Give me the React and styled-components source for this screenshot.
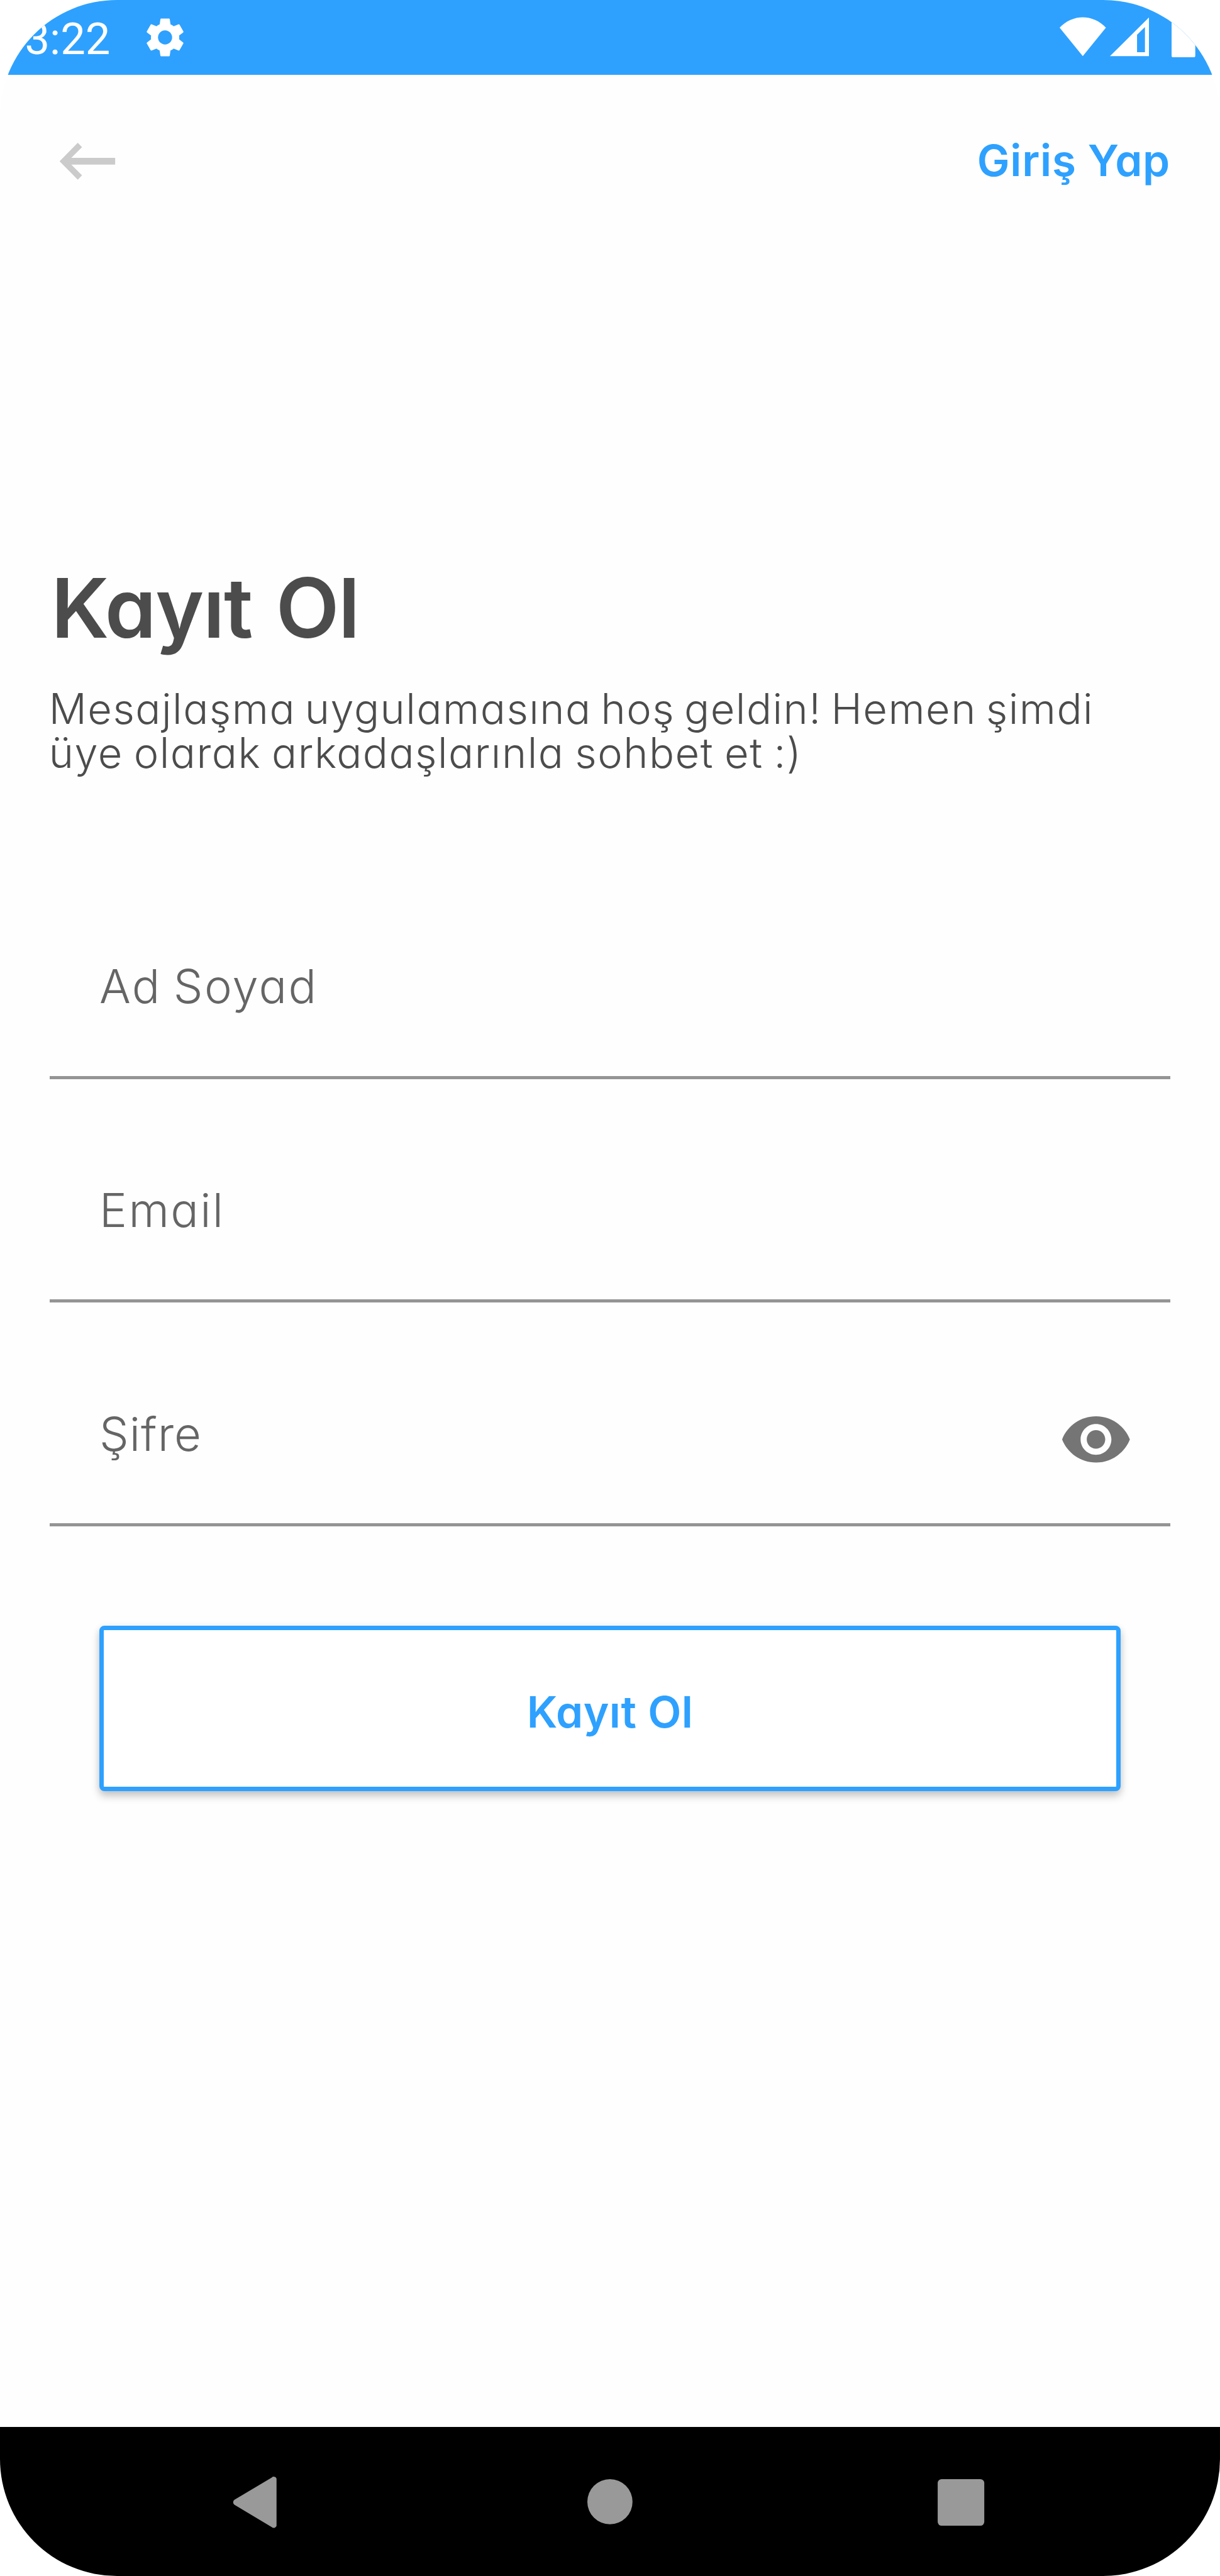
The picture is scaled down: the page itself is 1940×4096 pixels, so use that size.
import React from "react";
import styled, { createGlobalStyle } from "styled-components";
import { MdSettings, MdVisibility } from "react-icons/md";

const BLUE = "#2ea1ff";

const GlobalStyle = createGlobalStyle`
  * { box-sizing: border-box; }
  body { margin: 0; background: #fff; }
`;

const Screen = styled.main`
  display: flex;
  flex-direction: column;
  width: 1940px;
  height: 4096px;
  overflow: hidden;
  border-radius: 186px;
  background: #fefefe;
  font-family: Inter, "Liberation Sans", sans-serif;
  font-feature-settings: "cv11";
`;

const StatusBar = styled.header`
  display: flex;
  align-items: center;
  flex: none;
  height: 118.6px;
  padding: 0 39.5px;
  background: ${BLUE};
  color: #fff;
`;

const Clock = styled.span`
  padding-top: 5.6px;
  margin-right: 49.5px;
  font-family: Roboto, sans-serif;
  font-size: 70.5px;
  line-height: 82px;
`;

const GearIcon = styled(MdSettings)`
  width: 75px;
  height: 75px;
  margin-top: 1px;
`;

const StatusIcons = styled.div`
  display: flex;
  align-items: center;
  margin-left: auto;
`;

const StatusGlyph = styled.svg`
  width: ${(p) => p.$w}px;
  height: 74.5px;
  margin-left: ${(p) => p.$gap || 0}px;
  fill: #fff;
`;

const TopBar = styled.nav`
  display: flex;
  align-items: center;
  justify-content: space-between;
  flex: none;
  height: 276.6px;
  padding: 0 79px 0 90px;
`;

const BackArrow = styled.svg`
  width: 97px;
  height: 62.9px;
  fill: #cbcbcb;
`;

const LoginLink = styled.a`
  padding-bottom: 3px;
  color: ${BLUE};
  font-size: 69.2px;
  font-weight: 600;
  line-height: 84px;
  letter-spacing: 0.75px;
`;

const Content = styled.section`
  flex: 1;
  padding: 493.2px 79px 0;
`;

const Title = styled.h1`
  margin: 0 0 46px 2.2px;
  color: #4c4c4c;
  font-size: 131px;
  font-weight: 600;
  line-height: 158px;
  letter-spacing: -1.3px;
  word-spacing: 6px;
`;

const Intro = styled.p`
  margin: 0 0 128.1px -1.3px;
  color: #4c4c4c;
  font-size: 66.7px;
  font-weight: 300;
  line-height: 69.8px;
  letter-spacing: 1.5px;
  white-space: nowrap;
`;

const IntroLine = styled.span`
  display: block;
  word-spacing: ${(p) => p.$space}px;
`;

const Field = styled.label`
  display: flex;
  align-items: flex-end;
  justify-content: space-between;
  height: 355.7px;
  padding: 0 59.7px 0 79.1px;
  border-bottom: 5px solid #949494;
`;

const FieldLabel = styled.span`
  margin-bottom: 97.3px;
  color: #656565;
  font-size: 74px;
  font-weight: 300;
  line-height: 90px;
  letter-spacing: ${(p) => p.$track}px;
  word-spacing: -4px;
`;

const EyeIcon = styled(MdVisibility)`
  width: 117.6px;
  height: 117.6px;
  margin-bottom: 74.5px;
  color: #757575;
`;

const SubmitButton = styled.button`
  display: flex;
  align-items: center;
  justify-content: center;
  width: 1623.9px;
  height: 262.3px;
  margin: 158.1px 0 0 79.1px;
  padding: 10.8px 0 0;
  border: 7px solid ${BLUE};
  border-radius: 8px;
  background: #fff;
  box-shadow: 0 8px 14px rgba(0, 0, 0, 0.2), 0 2px 12px rgba(0, 0, 0, 0.08);
  color: ${BLUE};
  font: inherit;
  font-size: 69.2px;
  font-weight: 600;
  line-height: 84px;
  letter-spacing: 0.44px;
`;

const SystemNav = styled.footer`
  display: flex;
  align-items: center;
  justify-content: space-between;
  flex: none;
  height: 237.2px;
  padding: 0 367.4px;
  background: #000;
`;

const NavGlyph = styled.svg`
  width: 89.8px;
  height: 89.8px;
  fill: #999;
`;

export default function App() {
  return (
    <>
      <GlobalStyle />
      <Screen>
        <StatusBar>
          <Clock>3:22</Clock>
          <GearIcon />
          <StatusIcons>
            <StatusGlyph $w={73.6} viewBox="0 0 82 83">
              <path d="M0 24.500C11 12.500 26 6 41 6S71 12.500 82 24.500L41 75z" />
            </StatusGlyph>
            <StatusGlyph $w={62.4} $gap={5.8} viewBox="0 0 69.500 83">
              <path fillRule="evenodd" d="M69.500 6V75H0zM48 37V68H62V23.500z" />
            </StatusGlyph>
            <StatusGlyph $w={37.7} $gap={35.9} viewBox="0 0 42 83">
              <path d="M0 6H42V74a3 3 0 0 1-3 3H3a3 3 0 0 1-3-3z" />
            </StatusGlyph>
          </StatusIcons>
        </StatusBar>

        <TopBar>
          <BackArrow viewBox="100 251 108 70">
            <path d="M105.300 286L137.500 253.200 145 261 126 279.800H203.700V292H126L145 310.700 137.500 318.600z" />
          </BackArrow>
          <LoginLink>Giriş Yap</LoginLink>
        </TopBar>

        <Content>
          <Title>Kayıt Ol</Title>
          <Intro>
            <IntroLine $space={-5.5}>Mesajlaşma uygulamasına hoş geldin! Hemen şimdi</IntroLine>
            <IntroLine $space={-3.4}>üye olarak arkadaşlarınla sohbet et :)</IntroLine>
          </Intro>

          <Field>
            <FieldLabel $track={2.3}>Ad Soyad</FieldLabel>
          </Field>
          <Field>
            <FieldLabel $track={2.3}>Email</FieldLabel>
          </Field>
          <Field>
            <FieldLabel $track={1}>Şifre</FieldLabel>
            <EyeIcon />
          </Field>

          <SubmitButton type="button">Kayıt Ol</SubmitButton>
        </Content>

        <SystemNav>
          <NavGlyph viewBox="409 4378 100 100">
            <path d="M490 4389.500V4468.500a5 5 0 0 1-8.500 4.300L415.500 4433.500a5.500 5.500 0 0 1 0-9L481.500 4385.200a5 5 0 0 1 8.500 4.300z" />
          </NavGlyph>
          <NavGlyph viewBox="1030 4378 100 100">
            <circle cx="1080" cy="4428" r="40" />
          </NavGlyph>
          <NavGlyph viewBox="1651 4378 100 100">
            <rect x="1660" y="4388" width="82.500" height="82.500" rx="7" />
          </NavGlyph>
        </SystemNav>
      </Screen>
    </>
  );
}
